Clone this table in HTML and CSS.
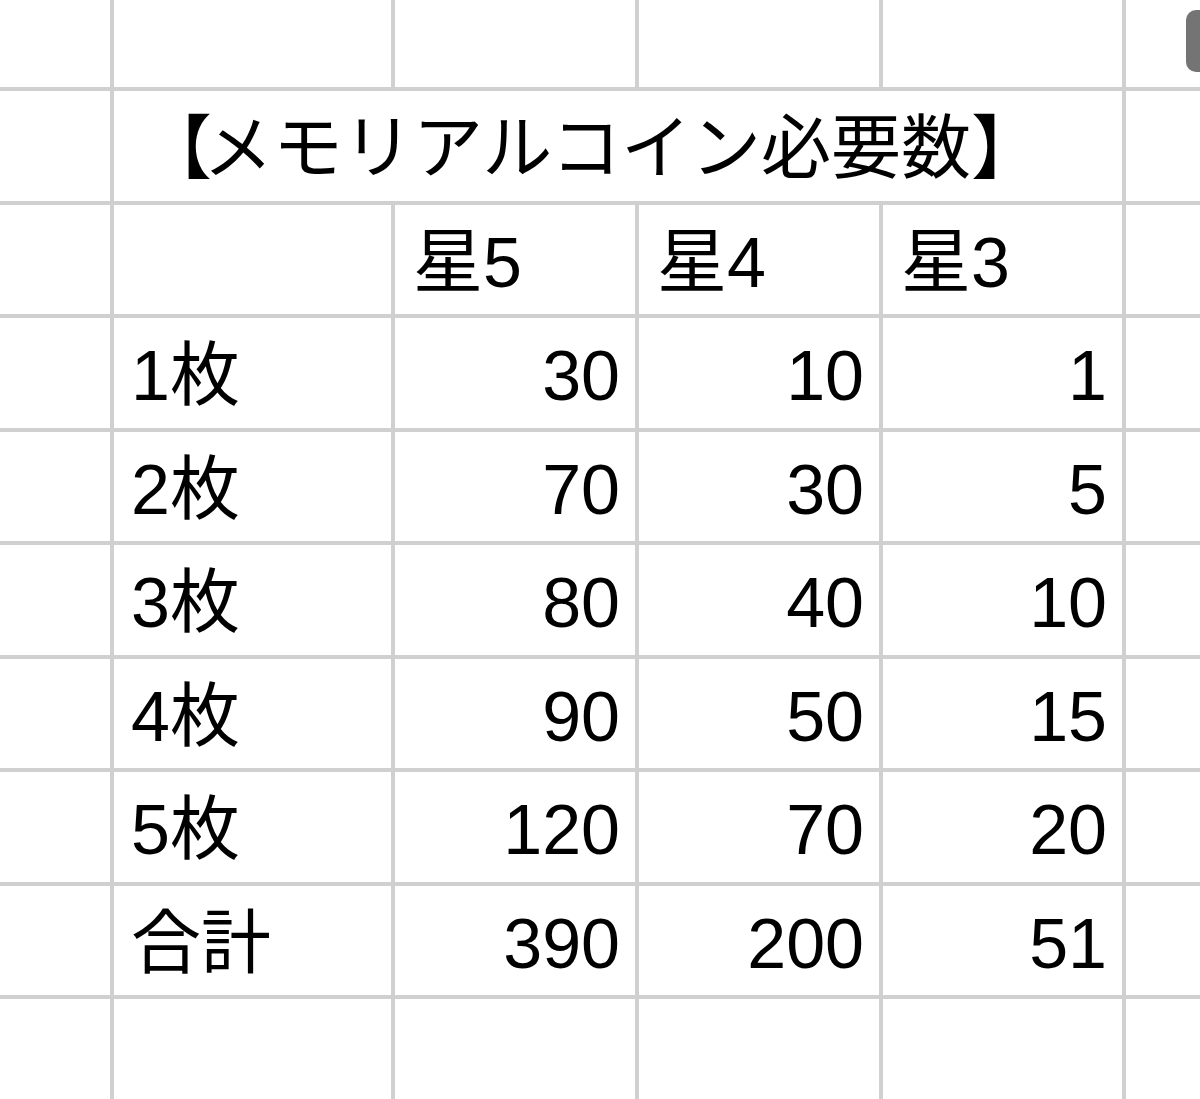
FILE: index.html
```html
<!DOCTYPE html>
<html lang="ja">
<head>
<meta charset="utf-8">
<link rel="stylesheet" href="styles.css">
</head>
<body>
<div class="sheet">
  <div class="c"></div><div class="c"></div><div class="c"></div><div class="c"></div><div class="c"></div><div class="c"></div>

  <div class="c"></div><div class="c title"><span class="br-l">【</span>メモリアルコイン必要数】</div><div class="c"></div>

  <div class="c"></div><div class="c"></div><div class="c hd">星5</div><div class="c hd">星4</div><div class="c hd">星3</div><div class="c"></div>

  <div class="c"></div><div class="c lb">1枚</div><div class="c n">30</div><div class="c n">10</div><div class="c n">1</div><div class="c"></div>
  <div class="c"></div><div class="c lb">2枚</div><div class="c n">70</div><div class="c n">30</div><div class="c n">5</div><div class="c"></div>
  <div class="c"></div><div class="c lb">3枚</div><div class="c n">80</div><div class="c n">40</div><div class="c n">10</div><div class="c"></div>
  <div class="c"></div><div class="c lb">4枚</div><div class="c n">90</div><div class="c n">50</div><div class="c n">15</div><div class="c"></div>
  <div class="c"></div><div class="c lb">5枚</div><div class="c n">120</div><div class="c n">70</div><div class="c n">20</div><div class="c"></div>
  <div class="c"></div><div class="c lb">合計</div><div class="c n">390</div><div class="c n">200</div><div class="c n">51</div><div class="c"></div>

  <div class="c"></div><div class="c"></div><div class="c"></div><div class="c"></div><div class="c"></div><div class="c"></div>
</div>
<div class="thumb"></div>
</body>
</html>
```
FILE: styles.css
```css
html, body {
  margin: 0;
  padding: 0;
  background: #ffffff;
  overflow: hidden;
}
body {
  width: 1200px;
  height: 1099px;
  position: relative;
  font-family: "Liberation Sans", "Noto Sans CJK JP", sans-serif;
  color: #000;
}
.sheet {
  display: grid;
  grid-template-columns: 110px 277px 240px 240px 239px 80px;
  grid-template-rows: 87px 110px 109px 110px 109px 110px 109px 110px 109px 110px;
  gap: 4px;
  background: #d0d0d0;
  width: 1210px;
}
.c {
  background: #ffffff;
  display: flex;
  align-items: center;
  font-size: 70px;
  line-height: 1;
  white-space: nowrap;
  padding-top: 6px;
  box-sizing: border-box;
}
.title {
  grid-column: 2 / span 4;
  padding-left: 28px;
  font-size: 70px;
}
.br-l {
  letter-spacing: -9px;
}
.hd {
  padding-left: 18px;
}
.lb {
  padding-left: 17px;
}
.n {
  justify-content: flex-end;
  padding-right: 15px;
}
.thumb {
  position: absolute;
  top: 10px;
  left: 1186px;
  width: 24px;
  height: 62px;
  border-radius: 10px;
  background: #747474;
}
```
